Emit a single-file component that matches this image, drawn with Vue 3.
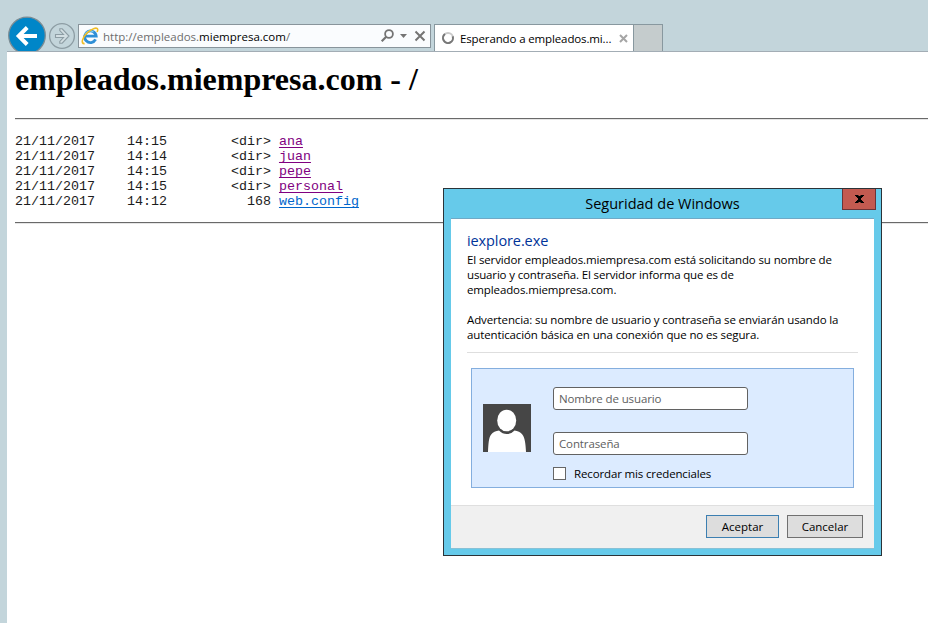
<script setup>
import { ref } from 'vue'

const pad = (text, width) => text.padStart(width, ' ')
const entries = [
  { date: '21/11/2017', time: '14:15', size: '<dir>', name: 'ana', visited: true },
  { date: '21/11/2017', time: '14:14', size: '<dir>', name: 'juan', visited: true },
  { date: '21/11/2017', time: '14:15', size: '<dir>', name: 'pepe', visited: true },
  { date: '21/11/2017', time: '14:15', size: '<dir>', name: 'personal', visited: true },
  { date: '21/11/2017', time: '14:12', size: '168', name: 'web.config', visited: false },
]
const user = ref('')
const password = ref('')
const remember = ref(false)
</script>

<template>
  <div class="window">
    <header class="chrome">
      <svg class="back" width="38" height="35" viewBox="0 0 38 35">
        <circle cx="19" cy="19.500" r="18.3" fill="#0086c8" stroke="#7b8c94" stroke-width="1.3" />
        <path d="M29 20H11M19.200 11.500 10.700 20l8.500 8.500" fill="none" stroke="#fff" stroke-width="4" />
      </svg>
      <svg class="forward" width="28" height="28" viewBox="0 0 28 28">
        <circle cx="14" cy="14" r="12.4" fill="none" stroke="#8d9da4" stroke-width="1.3" />
        <path d="M7.500 12.500h8l-3.700-4V6.800h2.400l6.800 7.200-6.800 7.200h-2.400v-1.700l3.700-4h-8z" fill="#d3dfe3" stroke="#8d9da4" stroke-width="1.1" />
      </svg>
      <div class="address">
        <svg class="ie" width="18" height="18" viewBox="0 0 18 18">
          <path d="M14.600 12.400a5.800 5.800 0 1 1 .6-3.200H5" fill="none" stroke="#2f8fd6" stroke-width="2.800" />
          <path d="M4 7.500a5.300 5.300 0 0 1 8.500-2.400" fill="none" stroke="#7fd0f4" stroke-width="1.200" />
          <path d="M3.600 16.600C-.6 17 1.200 10.600 6.400 5.700 11 1.400 16.300-.2 16.700 2.300c.1 1-.1 1.700-.6 2.700" fill="none" stroke="#f0bd25" stroke-width="1.600" />
        </svg>
        <span class="url"><span>http://empleados.</span><b>miempresa.com</b><span>/</span></span>
        <svg class="tools" width="48" height="16" viewBox="0 0 48 16">
          <circle cx="9" cy="6" r="3.900" fill="none" stroke="#747474" stroke-width="1.800" />
          <path d="M6.200 8.800 1.700 13.300" stroke="#747474" stroke-width="2.200" />
          <path d="M20 6h7l-3.500 4z" fill="#747474" />
          <path d="m35.500 3.500 9 9m0-9-9 9" stroke="#747474" stroke-width="2" />
        </svg>
      </div>
      <div class="tab">
        <svg class="spinner" width="14" height="14" viewBox="0 0 14 14">
          <circle cx="7" cy="7" r="5" fill="none" stroke="#c9c9c9" stroke-width="2" />
          <path d="M4 3A5 5 0 1 0 11.700 5.300" fill="none" stroke="#777" stroke-width="2" />
        </svg>
        <span class="tab-title">Esperando a empleados.mi...</span>
        <svg class="tab-close" width="9" height="9" viewBox="0 0 9 9">
          <path d="m1 1 7 7m0-7-7 7" stroke="#a5a5a5" stroke-width="2" />
        </svg>
      </div>
      <div class="new-tab"></div>
    </header>

    <main class="page">
      <h1>empleados.miempresa.com - /</h1>
      <hr />
      <div class="listing">
        <div v-for="e in entries" :key="e.name" class="entry">{{ e.date }}{{ pad(e.time, 9) }}{{ pad(e.size, 13) }}&nbsp;<a :class="{ visited: e.visited }">{{ e.name }}</a></div>
      </div>
      <hr />
    </main>

    <section class="dialog">
      <div class="titlebar">
        <span class="title">Seguridad de Windows</span>
        <button class="close">
          <svg width="9" height="8" viewBox="0 0 9 8">
            <path d="M0 0h3.500v1h2V0H9v1H8v1H7v1H6v2h1v1h1v1h1v1H5.500V7h-2v1H0V7h1V6h1V5h1V3H2V2H1V1H0z" fill="#000" />
          </svg>
        </button>
      </div>
      <div class="client">
        <div class="body">
          <h2>iexplore.exe</h2>
          <div class="message">
            <div>El servidor empleados.miempresa.com está solicitando su nombre de</div>
            <div class="tight">usuario y contraseña. El servidor informa que es de</div>
            <div>empleados.miempresa.com.</div>
            <div class="warning">Advertencia: su nombre de usuario y contraseña se enviarán usando la</div>
            <div>autenticación básica en una conexión que no es segura.</div>
          </div>
          <div class="credentials">
            <svg class="avatar" width="48" height="48" viewBox="0 0 48 48">
              <path d="M0 0h48v48H0z" fill="#464646" />
              <ellipse cx="23.700" cy="16.500" rx="9.500" ry="10.800" fill="#fff" />
              <path d="M5 48c.5-9 .7-14 3-17.300 1.700-2.500 5-4 8-4.200 4.500 4.800 11 4.800 15.500 0 3 .2 6.300 1.700 8 4.200 2.300 3.300 3.100 8.300 3.500 17.300z" fill="#fff" />
            </svg>
            <div class="fields">
              <input v-model="user" class="f-user" type="text" placeholder="Nombre de usuario" />
              <input v-model="password" class="f-pass" type="password" placeholder="Contraseña" />
              <label class="remember"><input v-model="remember" type="checkbox" /><span>Recordar mis credenciales</span></label>
            </div>
          </div>
        </div>
        <footer class="actions">
          <button class="ok"><span>Aceptar</span></button>
          <button class="cancel"><span>Cancelar</span></button>
        </footer>
      </div>
    </section>
  </div>
</template>

<style>
body {
  background: #c3d5db;
  overflow: hidden;
}
</style>

<style scoped>
* {
  box-sizing: border-box;
}
.window {
  width: 928px;
  height: 623px;
  position: relative;
  overflow: hidden;
  display: flex;
  flex-direction: column;
  background: #c3d5db;
  font-family: 'Open Sans', sans-serif;
  font-size: 11.5px;
  color: #000;
}
.chrome {
  height: 51px;
  flex: none;
  display: flex;
  align-items: flex-start;
  padding-left: 8px;
}
.chrome svg {
  flex: none;
  display: block;
}
.back {
  margin-top: 16px;
}
.forward {
  margin: 22px 0 0 2px;
}
.address {
  width: 353px;
  height: 24px;
  margin: 24px 0 0 2px;
  border: 1px solid #88949b;
  background: #fafcfe;
  display: flex;
  align-items: center;
}
.ie {
  margin-left: 2px;
}
.url {
  margin-left: 4px;
  color: #6d6d6d;
  white-space: nowrap;
}
.url b {
  font-weight: 400;
  color: #000;
}
.tools {
  margin-left: auto;
  margin-right: 2px;
}
.tab {
  width: 200px;
  height: 27px;
  margin: 24px 0 0 3px;
  border: 1px solid #88989f;
  border-bottom: 0;
  background: #fff;
  display: flex;
  align-items: center;
  padding: 0 5px 0 6px;
}
.tab-title {
  margin-left: 5px;
  padding-top: 1px;
  white-space: nowrap;
  letter-spacing: -0.13px;
}
.tab-close {
  margin-left: auto;
}
.new-tab {
  width: 29px;
  height: 27px;
  margin-top: 24px;
  border: 1px solid #88989f;
  border-width: 1px 1px 0 0;
  background: #c5cccd;
}
.page {
  flex: 1;
  margin-left: 7px;
  padding: 10px 0 0 8px;
  border-top: 1px solid #a3adb5;
  background: #fff;
}
h1 {
  margin: 0;
  font: bold 32px/35px 'Liberation Serif', serif;
  white-space: nowrap;
}
hr {
  height: 2px;
  margin: 21px 0 0;
  border: 0;
  border-top: 1px solid #696969;
  border-bottom: 1px solid #e5e5e5;
}
.listing {
  padding-top: 14px;
  font: 13.333px/15px 'Liberation Mono', monospace;
  white-space: pre;
  color: #1c1c1c;
}
.entry {
  height: 15px;
}
.entry a {
  color: #0066cc;
  text-decoration: underline;
  text-decoration-thickness: 1px;
  text-underline-offset: 2px;
  text-decoration-skip-ink: none;
}
.entry a.visited {
  color: #800080;
}
.listing + hr {
  margin-top: 13px;
}
.dialog {
  position: absolute;
  left: 443px;
  top: 188px;
  width: 439px;
  height: 368px;
  padding: 0 7px 6px;
  border: 1px solid #2b3338;
  background: #66caea;
  display: flex;
  flex-direction: column;
}
.titlebar {
  height: 29px;
  display: grid;
  grid-template-columns: 1fr auto;
}
.title {
  padding-left: 32px;
  text-align: center;
  font-size: 14.5px;
  line-height: 29px;
}
.close {
  width: 34px;
  height: 21px;
  margin-right: -2px;
  padding: 0;
  border: 1px solid #6b3437;
  border-top: 0;
  background: #c35a50;
  display: flex;
  align-items: center;
  justify-content: center;
}
.client {
  flex: 1;
  display: flex;
  flex-direction: column;
  border-top: 1px solid #6fa9c6;
  border-bottom: 1px solid #88c1d6;
  background: #fff;
}
.body {
  flex: 1;
  padding: 11px 16px 0;
}
h2 {
  margin: 0;
  font-size: 14.5px;
  font-weight: 400;
  line-height: 22px;
  color: #003399;
  letter-spacing: -0.1px;
}
.message {
  height: 101px;
  border-bottom: 1px solid #dedede;
  line-height: 15px;
  white-space: nowrap;
  letter-spacing: -0.12px;
}
.tight {
  letter-spacing: -0.16px;
}
.warning {
  margin-top: 15px;
}
.credentials {
  height: 120px;
  margin: 15px 4px 0;
  padding: 0 11px;
  border: 1px solid #84aede;
  background: #dcebff;
  display: flex;
  align-items: center;
}
.avatar {
  display: block;
}
.fields {
  align-self: flex-start;
  padding-top: 18px;
  margin-left: 22px;
  display: flex;
  flex-direction: column;
}
.fields input[type='text'],
.fields input[type='password'] {
  width: 195px;
  height: 23px;
  margin: 0 0 22px;
  padding: 0 5px;
  border: 1px solid #626262;
  border-radius: 3px;
  background: #fff;
  font: 11.5px 'Open Sans', sans-serif;
  letter-spacing: -0.12px;
  outline: 0;
}
.fields .f-pass[type='password'] {
  margin-bottom: 12px;
}
input::placeholder {
  color: #606060;
  opacity: 1;
}
.remember {
  display: flex;
  align-items: center;
  height: 13px;
  gap: 8px;
}
.remember input {
  appearance: none;
  width: 13px;
  height: 13px;
  margin: 0;
  border: 1px solid #666;
  background: #fff;
}
.remember span {
  white-space: nowrap;
  letter-spacing: -0.14px;
}
.actions {
  height: 43px;
  padding: 9px 11px 0 0;
  border-top: 1px solid #dfdfdf;
  background: #f0f0f0;
  display: flex;
  justify-content: flex-end;
  gap: 8px;
}
.actions button {
  width: 76px;
  height: 23px;
  padding: 0;
  border: 1px solid #707070;
  background: #dddddd;
  font: 11.5px 'Open Sans', sans-serif;
  color: #000;
}
.actions .ok {
  width: 73px;
  border-color: #3c7fb1;
}
</style>
